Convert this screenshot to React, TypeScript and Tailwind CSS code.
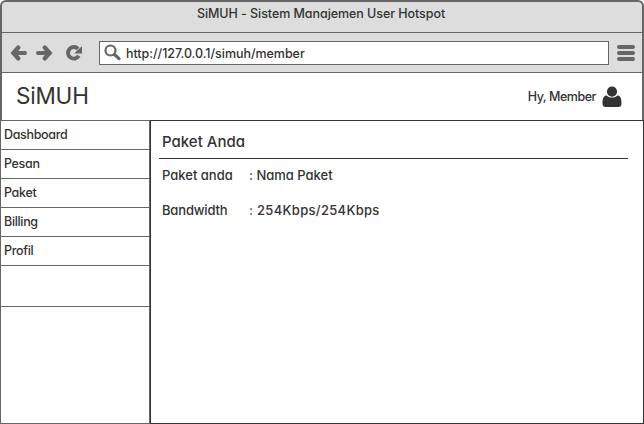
import React from "react";

const menu = ["Dashboard", "Pesan", "Paket", "Billing", "Profil"];

function Arrow({ flip = false }: { flip?: boolean }) {
  return (
    <svg
      width="18"
      height="16"
      viewBox="0 0 18 16"
      className={flip ? "-scale-x-100" : ""}
      fill="none"
      stroke="#666"
      strokeWidth="4"
      strokeLinecap="round"
    >
      <path d="M4 8H15" />
      <path d="M8.2 2.6L3.4 8L8.2 13.4" strokeWidth="4.4" strokeLinejoin="miter" />
    </svg>
  );
}

function Toolbar() {
  return (
    <div className="flex h-10 items-center border-b border-[#666] pl-[8px] pr-[7px]">
      <Arrow />
      <div className="ml-[7px] flex">
        <Arrow flip />
      </div>
      <svg width="18" height="18" viewBox="0 0 18 18" className="ml-[12px]" fill="none">
        <path d="M13 4.8A5.8 5.8 0 1 0 13.8 11.8" stroke="#666" strokeWidth="3.9" />
        <path d="M17 2V9.6H9.4L12 6.8Z" fill="#666" />
      </svg>
      <div className="ml-[16px] flex h-6 w-[510px] items-center border border-[#666] bg-white pl-1">
        <svg width="17" height="17" viewBox="0 0 17 17" fill="none" stroke="#666">
          <circle cx="6.5" cy="6.5" r="5" strokeWidth="2.2" />
          <path d="M10.5 10.5L15 14.6" strokeWidth="3.2" strokeLinecap="round" />
        </svg>
        <span className="ml-[5px] pt-[3px] text-[12.5px] tracking-[-0.04px]">http://127.0.0.1/simuh/member</span>
      </div>
      <div className="ml-2 flex w-[18px] flex-col gap-[2px]">
        <i className="h-1 rounded-full bg-[#666]" />
        <i className="h-1 rounded-full bg-[#666]" />
        <i className="h-1 rounded-full bg-[#666]" />
      </div>
    </div>
  );
}

export default function App() {
  return (
    <div className="flex h-[424px] w-[644px] flex-col overflow-hidden bg-white font-['Inter',sans-serif] font-medium leading-none whitespace-nowrap text-[#333] [font-feature-settings:'cv11','calt'_0]">
      <div className="h-[120px] shrink-0 rounded-t-[6px] border-x-2 border-t-2 border-[#666] bg-[#ddd]">
        <div className="flex h-[31px] justify-center border-b border-[#666] pr-[2px] pt-[6px] text-[12.5px] tracking-[-0.06px]">
          SiMUH - Sistem Manajemen User Hotspot
        </div>
        <Toolbar />
        <div className="flex h-[47px] items-center bg-white pl-[14px] pr-[20px]">
          <span className="text-[22.5px] font-normal tracking-[-0.2px]">SiMUH</span>
          <span className="ml-auto pt-[2px] text-[12.5px] tracking-[-0.45px]">Hy, Member</span>
          <svg width="20" height="22" viewBox="0 0 20 22" className="ml-[6px]" fill="#333">
            <path d="M4.2 9.2C1.5 10 .5 12.5 .5 17.5C.5 20 1.8 21 3.5 21H16.5C18.2 21 19.5 20 19.5 17.5C19.5 12.5 18.5 10 15.8 9.2C14.2 10.8 12.2 11.6 10 11.6S5.8 10.8 4.2 9.2Z" />
            <circle cx="10" cy="5.6" r="5.1" />
          </svg>
        </div>
      </div>
      <div className="flex h-[304px]">
        <nav className="w-[150px] border border-[#666] text-[12.5px] tracking-[-0.33px]">
          {menu.map((item) => (
            <div key={item} className="flex h-[29px] items-center border-b border-[#666] pl-[3px]">
              {item}
            </div>
          ))}
          <div className="h-[41px] border-b border-[#666]" />
        </nav>
        <main className="w-[494px] border border-[#333] pl-2 text-[13px]">
          <h1 className="flex h-[38px] w-[469px] items-center border-b border-[#333] pl-[3px] pt-[4px] text-[15px]">
            Paket Anda
          </h1>
          <dl className="grid grid-cols-[87px_1fr] gap-y-[22px] pl-[3px] pt-[10px]">
            <dt>Paket anda</dt>
            <dd>: Nama Paket</dd>
            <dt className="tracking-[-0.17px]">Bandwidth</dt>
            <dd className="tracking-[0.31px]">: 254Kbps/254Kbps</dd>
          </dl>
        </main>
      </div>
    </div>
  );
}
